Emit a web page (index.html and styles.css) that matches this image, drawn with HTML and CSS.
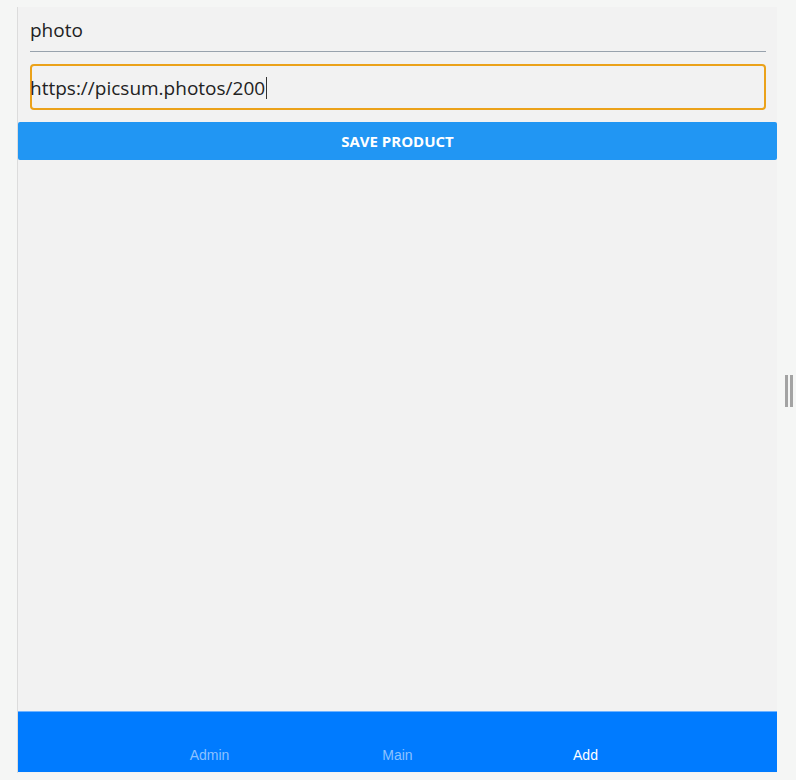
FILE: index.html
```html
<!DOCTYPE html>
<html>
<head>
<meta charset="utf-8">
<link rel="stylesheet" href="styles.css">
</head>
<body>
<div class="app">
  <div class="form">
    <div class="field-label">photo</div>
    <div class="field-input"><span class="value">https://picsum.photos/200</span><span class="caret"></span></div>
  </div>
  <button class="save-btn">SAVE PRODUCT</button>
  <div class="spacer"></div>
  <nav class="tabbar">
    <span class="tab">Admin</span>
    <span class="tab">Main</span>
    <span class="tab active">Add</span>
  </nav>
</div>
<div class="grip"><span></span><span></span></div>
</body>
</html>
```
FILE: styles.css
```css
html, body {
  margin: 0;
  padding: 0;
}
body {
  background: #f5f6f5;
  width: 796px;
  height: 780px;
  overflow: hidden;
  position: relative;
}
.app {
  margin-left: 17px;
  margin-top: 7px;
  width: 759px;
  height: 766px;
  border-left: 1px solid #dcdcdc;
  background: #f2f2f2;
  display: flex;
  flex-direction: column;
}
.form {
  padding: 0 11px 0 12px;
  font-family: "Open Sans", "Noto Sans", sans-serif;
  color: #222;
}
.field-label {
  font-size: 19px;
  line-height: 26px;
  padding-top: 10px;
  padding-bottom: 8px;
  border-bottom: 1px solid #98a2ad;
}
.field-input {
  margin-top: 12px;
  border: 2px solid #eba21a;
  border-radius: 4px;
  font-size: 19px;
  line-height: 26px;
  display: flex;
  align-items: center;
  padding-top: 1px;
  box-sizing: content-box;
  height: 41px;
  text-indent: -2px;
}
.caret {
  display: inline-block;
  width: 1px;
  height: 22px;
  background: #333;
  margin-left: 1px;
}
.save-btn {
  margin-top: 12px;
  height: 38px;
  width: 100%;
  border: none;
  border-radius: 2px;
  background: #2196f3;
  color: #fff;
  font-family: "Open Sans", "Noto Sans", sans-serif;
  font-weight: 700;
  font-size: 15px;
  padding: 0;
}
.spacer {
  flex: 1;
}
.tabbar {
  height: 60px;
  border-top: 1px solid #6fb2ff;
  background: #007bff;
  display: grid;
  grid-template-columns: repeat(3, 188px);
  justify-content: center;
  align-items: start;
  margin-bottom: 1px;
  font-family: "Liberation Sans", Arial, sans-serif;
  font-size: 14px;
}
.tab {
  text-align: center;
  padding-top: 35px;
  line-height: 16px;
  color: #8cc2ff;
}
.tab.active {
  color: #fff;
}
.grip {
  position: absolute;
  left: 785px;
  top: 375px;
  display: flex;
  gap: 2px;
}
.grip span {
  display: block;
  width: 3px;
  height: 32px;
  background: #a3a3a3;
}
```
